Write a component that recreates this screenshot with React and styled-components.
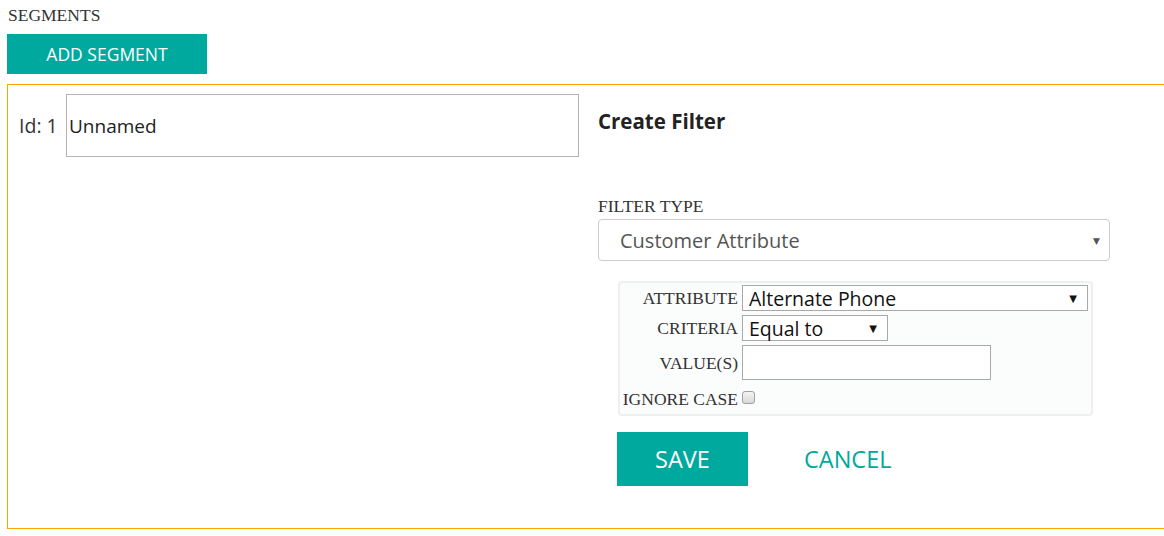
import styled, { createGlobalStyle } from "styled-components";

const GlobalStyle = createGlobalStyle`
  html, body {
    margin: 0;
    padding: 0;
    overflow: hidden;
    background: #fff;
  }
  * {
    box-sizing: border-box;
  }
`;

const teal = "#00a99d";
const sans = `"Open Sans", "DejaVu Sans", sans-serif`;
const serif = `"Liberation Serif", "Times New Roman", serif`;

const Page = styled.div`
  padding: 5px 0 0 7px;
  width: 1200px;
`;

const Title = styled.div`
  font-family: ${serif};
  font-size: 17.5px;
  line-height: 20px;
  color: #333;
  margin: 0 0 9px 1px;
`;

const AddButton = styled.button`
  display: block;
  width: 200px;
  height: 40px;
  border: none;
  background: ${teal};
  color: #fff;
  font-family: ${sans};
  font-size: 17.5px;
  padding: 0;
  cursor: pointer;
`;

const SegmentBox = styled.div`
  margin-top: 10px;
  width: 1180px;
  height: 445px;
  border: 1px solid #ffa500;
  border-right: none;
  padding: 9px 0 0 11px;
  display: flex;
  align-items: flex-start;
  gap: 19px;
`;

const NameRow = styled.div`
  display: flex;
  align-items: center;
`;

const IdLabel = styled.span`
  width: 47px;
  font-family: ${sans};
  font-size: 19.5px;
  color: #333;
`;

const NameInput = styled.input`
  width: 513px;
  height: 63px;
  border: 1px solid #b4b4b4;
  padding: 0 0 0 2px;
  font-family: ${sans};
  font-size: 19px;
  color: #222;
  outline: none;
`;

const FilterColumn = styled.div`
  padding-top: 14px;
  display: flex;
  flex-direction: column;
`;

const Heading = styled.h3`
  margin: 0;
  font-family: ${sans};
  font-size: 20.5px;
  line-height: 26px;
  font-weight: 700;
  color: #222;
`;

const FieldLabel = styled.div`
  margin-top: 62px;
  font-family: ${serif};
  font-size: 17.5px;
  line-height: 20px;
  color: #333;
`;

const SelectBox = styled.div`
  display: flex;
  align-items: center;
  justify-content: space-between;
  width: ${(p) => p.width}px;
  height: ${(p) => p.height}px;
  border: 1px solid ${(p) => (p.rounded ? "#ccc" : "#a9a9a9")};
  border-radius: ${(p) => (p.rounded ? "4px" : "0")};
  padding: ${(p) => (p.rounded ? "0 9px 0 21px" : "0 10px 0 6px")};
  font-family: ${sans};
  font-size: ${(p) => (p.rounded ? 20 : 19.5)}px;
  color: ${(p) => (p.rounded ? "#555" : "#111")};
  background: #fff;
`;

const Arrow = styled.span`
  font-size: ${(p) => (p.small ? 9 : 10)}px;
  color: ${(p) => (p.small ? "#555" : "#111")};
  line-height: 1;
`;

const TypeSelect = styled(SelectBox)`
  margin-top: 3px;
`;

const Panel = styled.div`
  margin: 20px 0 0 20px;
  width: 475px;
  height: 135px;
  border: 2px solid #eef0f0;
  border-radius: 4px;
  background: #fbfcfc;
  padding-top: 2px;
  display: grid;
  grid-template-columns: 118px auto;
  grid-template-rows: 26px 26px 35px 26px;
  column-gap: 4px;
  row-gap: 4px;
  align-items: center;
`;

const RowLabel = styled.span`
  text-align: right;
  font-family: ${serif};
  font-size: 17.5px;
  color: #333;
  white-space: nowrap;
  margin-left: -6px;
  padding-top: ${(p) => (p.low ? 4 : 1)}px;
`;

const ValueInput = styled.input`
  width: 249px;
  height: 35px;
  border: 1px solid #a9a9a9;
  outline: none;
  font-family: ${sans};
  font-size: 16px;
`;

const Checkbox = styled.input.attrs({ type: "checkbox" })`
  appearance: none;
  margin: 0;
  width: 13px;
  height: 13px;
  border: 1px solid #a0a0a0;
  border-radius: 3px;
  background: linear-gradient(#f4f4f4, #d8d8d8);
`;

const Actions = styled.div`
  margin: 16px 0 0 19px;
  display: flex;
  align-items: center;
  gap: 56px;
`;

const SaveButton = styled.button`
  width: 131px;
  height: 54px;
  border: none;
  background: ${teal};
  color: #fff;
  font-family: ${sans};
  font-size: 23.5px;
  padding: 0;
  cursor: pointer;
`;

const CancelButton = styled.button`
  border: none;
  background: none;
  padding: 0;
  color: ${teal};
  font-family: ${sans};
  font-size: 23.5px;
  cursor: pointer;
`;

const App = () => {
  return (
    <Page>
      <GlobalStyle />
      <Title>SEGMENTS</Title>
      <AddButton>ADD SEGMENT</AddButton>
      <SegmentBox>
        <NameRow>
          <IdLabel>Id: 1</IdLabel>
          <NameInput defaultValue="Unnamed" />
        </NameRow>
        <FilterColumn>
          <Heading>Create Filter</Heading>
          <FieldLabel>FILTER TYPE</FieldLabel>
          <TypeSelect rounded width={512} height={42}>
            <span>Customer Attribute</span>
            <Arrow small>▼</Arrow>
          </TypeSelect>
          <Panel>
            <RowLabel>ATTRIBUTE</RowLabel>
            <SelectBox width={346} height={26}>
              <span>Alternate Phone</span>
              <Arrow>▼</Arrow>
            </SelectBox>
            <RowLabel>CRITERIA</RowLabel>
            <SelectBox width={146} height={26}>
              <span>Equal to</span>
              <Arrow>▼</Arrow>
            </SelectBox>
            <RowLabel>VALUE(S)</RowLabel>
            <ValueInput />
            <RowLabel low>IGNORE CASE</RowLabel>
            <Checkbox />
          </Panel>
          <Actions>
            <SaveButton>SAVE</SaveButton>
            <CancelButton>CANCEL</CancelButton>
          </Actions>
        </FilterColumn>
      </SegmentBox>
    </Page>
  );
};

export default App;
